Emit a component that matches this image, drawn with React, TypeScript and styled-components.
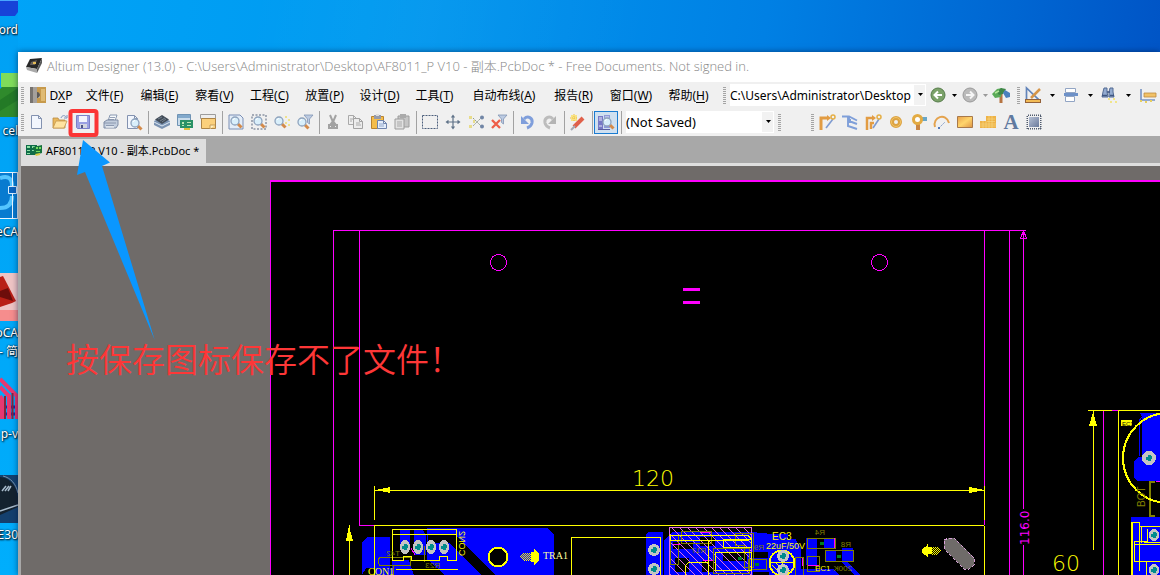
import React from "react";
import styled, { createGlobalStyle } from "styled-components";

const ui = `"Noto Sans", "Noto Sans CJK SC", sans-serif`;

const GlobalStyle = createGlobalStyle`
  * { box-sizing: border-box; }
  body { margin: 0; overflow: hidden; font-family: ${ui}; font-size: 12px; color: #000; }
  button, select { font: inherit; color: inherit; border: 0; background: none; padding: 0; margin: 0; border-radius: 0; }
  svg { display: block; }
`;

const Desktop = styled.div`
  position: relative;
  display: flex;
  height: 100vh;
  overflow: hidden;
  background:
    linear-gradient(100deg, rgba(255, 255, 255, 0) 20%, rgba(255, 255, 255, 0.03) 34%, rgba(255, 255, 255, 0) 52%),
    linear-gradient(98deg, #00a4f8 0%, #009af0 30%, #0080e4 62%, #0066d2 82%, #004cc0 100%);
`;

const Shortcuts = styled.nav`
  flex: 0 0 18px;
  overflow: hidden;
  display: flex;
  flex-direction: column;
  background: linear-gradient(#00a0f4, #00aefc);
`;

const Shortcut = styled.a`
  flex: 0 0 101px;
  color: #fff;
  text-decoration: none;
  text-shadow: 1px 1px 2px #000, 0 0 2px #013;
  line-height: 19px;
  white-space: pre;
  &:first-child { flex-basis: 71px; }
  svg { margin-bottom: 2px; }
`;

const ShortcutLabel = styled.span`
  display: flex;
  justify-content: flex-end;
  font-size: 12px;
`;

const Window = styled.main`
  flex: 1;
  min-width: 0;
  margin-top: 52px;
  display: flex;
  flex-direction: column;
  background: #a8a8a8;
  box-shadow: 0 0 6px rgba(0, 20, 60, 0.6);
`;

const TitleBar = styled.header`
  flex: 0 0 30px;
  display: flex;
  align-items: center;
  gap: 5px;
  padding: 0 0 3px 8px;
  background: #fff;
  color: #868686;
  white-space: pre;
`;

const Title = styled.h1`
  margin: 0;
  font: 300 13px/20px "Open Sans", "Noto Sans CJK SC", sans-serif;
`;

const Bar = styled.div<{ $height: number }>`
  flex: 0 0 ${(p) => p.$height}px;
  display: flex;
  align-items: center;
  padding: 0 0 2px 3px;
  overflow: hidden;
  background: #f0f0f0;
`;

const Grip = styled.span<{ $before?: number }>`
  flex: 0 0 3px;
  height: 17px;
  margin-left: ${(p) => p.$before ?? 0}px;
  margin-right: 1px;
  background: repeating-linear-gradient(#a4a4a4 0 1px, #f0f0f0 1px 2px);
`;

const MenuButton = styled.button<{ $width: number }>`
  flex: 0 0 ${(p) => p.$width}px;
  height: 22px;
  display: flex;
  align-items: center;
  justify-content: center;
  gap: 4px;
  white-space: pre;
  u { text-underline-offset: 2px; }
`;

const ToolButton = styled.button<{ $active?: boolean; $width?: number }>`
  flex: 0 0 ${(p) => p.$width ?? 23}px;
  height: 23px;
  display: flex;
  align-items: center;
  justify-content: center;
  ${(p) => p.$active && "background: #cfe0f0; border: 1px solid #1a7bd0;"}
`;

const Separator = styled.span`
  flex: 0 0 1px;
  height: 23px;
  margin: 0 1px 0 3px;
  background: #a2a2a2;
`;

const Combo = styled.label<{ $width: number }>`
  position: relative;
  flex: 0 0 ${(p) => p.$width}px;
  height: 22px;
  margin-left: 3px;
  background: linear-gradient(to left, #fff 1px, #f2f2f2 1px 12px, #fff 12px);
  border-top: 1px solid #fff;
  border-bottom: 1px solid #fff;
  svg { position: absolute; right: 3px; top: 8px; pointer-events: none; }
`;

const ComboSelect = styled.select<{ $size: number }>`
  appearance: none;
  width: 100%;
  height: 20px;
  padding: 0 14px 0 0;
  font-size: ${(p) => p.$size}px;
  outline: 0;
`;

const Tabs = styled.div`
  flex: 0 0 30px;
  margin: 0 0 0 3px;
  padding-top: 3px;
  border-bottom: 3px solid #dedede;
  display: flex;
`;

const Tab = styled.button`
  display: flex;
  align-items: center;
  gap: 4px;
  width: 185px;
  padding: 0 0 2px 5px;
  background: #dedede;
  font-size: 11px;
  white-space: pre;
`;

const Workspace = styled.section`
  flex: 1;
  min-height: 0;
  margin-left: 3px;
  overflow: hidden;
  background: #6f6b69;
`;

const Canvas = styled.svg`
  width: 100%;
  height: 100%;
`;

const Markup = styled.svg`
  position: absolute;
  left: 60px;
  top: 100px;
  pointer-events: none;
`;

const Remark = styled.p`
  position: absolute;
  left: 66px;
  top: 334px;
  margin: 0;
  font: 350 33px/48px "Noto Sans CJK SC", sans-serif;
  color: #fd3737;
  white-space: nowrap;
`;

const Lens = ({ x = 0, y = 0 }: { x?: number; y?: number }) => (
  <g transform={`translate(${x} ${y})`}>
    <path d="M8.500 8.500l4 4" stroke="#d38a4a" strokeWidth="3" />
    <circle cx="6" cy="6" r="4" fill="#d9effb" stroke="#8ea3bd" strokeWidth="1.300" />
    <path d="M4 5a2.500 2.500 0 0 1 2-1.500" stroke="#fff" fill="none" />
  </g>
);

const Page = ({ x = 2, y = 1, w = 11, h = 14, c = "#8392b0", f = "#f2f6fd" }) => (
  <path d={`M${x + 0.5} ${y + 0.5}h${w - 4}l3 3v${h - 4}h-${w - 1}z M${x + w - 3.5} ${y + 0.5}v3h3`} fill={f} stroke={c} />
);

const Funnel = () => <path d="M7 1h9l-3.500 4v5l-2-1.500V5z" fill="#bccbe2" stroke="#8194b4" strokeWidth=".8" />;

const glyphs: Record<string, React.ReactNode> = {
  new: <Page />,
  open: (
    <>
      <path d="M1 14V4h5l1 2h6v8z" fill="#e9b85c" stroke="#b98b42" strokeWidth=".8" />
      <path d="M1 14l3-7h11l-3 7z" fill="#ffe3a0" stroke="#c5984e" strokeWidth=".8" />
      <path d="M9 4c1-3 4-3 5-1m1-2v3h-3" stroke="#7d95bd" fill="none" />
    </>
  ),
  save: (
    <>
      <path d="M1.500 1.500h13v13h-12l-1-1z" fill="#9ba0e2" stroke="#7a7fc8" />
      <path d="M4 2h8v6H4z" fill="#f3f5fd" />
      <path d="M5 10h7v4H5z" fill="#d3d6e0" />
      <path d="M6 11h2v3H6z" fill="#4c5384" />
    </>
  ),
  print: (
    <>
      <path d="M5 7l2-6h7l-2 6z" fill="#f7fafd" stroke="#8897b0" />
      <path d="M1 8l3-2h11v5l-2 3H1z" fill="#c2cddd" stroke="#7e8ca5" />
      <path d="M1 9h12M3 11.500h8M7 3.500h5M6 5.500h5" stroke="#7e8ca5" strokeWidth=".8" />
      <path d="M3 13h8" stroke="#fff" />
    </>
  ),
  preview: (<><Page x={1} /><Lens x={3} y={3} /></>),
  layers: (
    <>
      <path d="M0 7l8-4 8 4v4l-8 4-8-4z" fill="#7b93b2" />
      <path d="M0 8l8 4 8-4" stroke="#dce7f2" fill="none" />
      <path d="M1 5.500L8 1l7 4.500L8 10z" fill="#424c58" />
      <path d="M4 5l4-2m-2 4l5-3M8 8l4-3" stroke="#8897a5" strokeWidth=".7" />
    </>
  ),
  board: (
    <>
      <path d="M.5.500h13v11H.5z" fill="#c9dceb" stroke="#6f93b4" />
      <path d="M1 1h12v3H1z" fill="#82a9cc" />
      <path d="M3 6h13v8H3z" fill="#2a9267" />
      <path d="M5 8h2v2H5zm5 0h4v1h-4zm0 3h4v1h-4zM5 11h2v1H5z" fill="#b9e7b4" />
      <path d="M7 14h6v2H7z" fill="#dec13b" />
    </>
  ),
  panel: (
    <>
      <path d="M.5.500h15v4H.5z" fill="#eee" stroke="#9c9c9c" />
      <path d="M1.500 4.500h14v10h-14z" fill="#fbd07c" stroke="#ae8547" />
      <path d="M10 15v-4h5" fill="#fff0c4" stroke="#c59b57" />
    </>
  ),
  zoomDoc: (<><path d="M1 1h11l3 3v11H1z" fill="#e4edf8" stroke="#7b8fb5" /><Lens x={1} y={1} /></>),
  zoomArea: (<><path d="M1 1h14v14H1z" fill="none" stroke="#59677e" strokeDasharray="2 1.500" /><Lens x={1} y={1} /></>),
  zoomSel: (<><Lens x={-1} y={1} /><path d="M11 2h2v2h-2zm3 3h2v2h-2zm-3 3h2v2h-2zm3 2h2v2h-2z" fill="#efe28d" /></>),
  zoomFilter: (<><Funnel /><Lens x={-1} y={2} /></>),
  cut: <path d="M5 1l3 7 3-7M8 7l-3 4m3-4l3 4M4 11h3v3H4zm5 0h3v3H9z" stroke="#a2a2a2" strokeWidth="2" fill="none" />,
  copy: (<><Page x={0} y={1} w={9} h={10} c="#a9a9a9" f="#efefef" /><Page x={5} y={4} w={10} h={11} c="#a2a2a2" f="#ececec" /><path d="M8 9h4m-4 2h5M2 5h3M2 7h2" stroke="#aaa" /></>),
  paste: (
    <>
      <path d="M.5 2.500h12v12H.5z" fill="#f4bd4b" stroke="#b9832e" />
      <path d="M3 1h7v4H3z" fill="#969bab" /><path d="M5 0h3v2H5z" fill="#ddd" />
      <Page x={6} y={6} w={10} h={9} c="#6f84ad" f="#e5eefb" /><path d="M8 10h5m-5 2h5" stroke="#93a8cc" />
    </>
  ),
  pasteMany: (
    <>
      <path d="M4 2h11v11H4z" fill="#c5c5c5" stroke="#9c9c9c" /><path d="M6 0h6v4H6z" fill="#aaa" />
      <path d="M1 5h9v10H1z" fill="#e2e2e2" stroke="#9c9c9c" /><path d="M3 8h5m-5 2h5m-5 2h5" stroke="#a9a9a9" />
    </>
  ),
  select: <path d="M.5 1.500h15v13H.5z" fill="none" stroke="#4c5f7c" strokeDasharray="2 1" />,
  move: <path d="M8 2v12M2 8h12M6.500 3.500L8 1.500l1.500 2m-3 9L8 14.500l1.500-2M3.500 6.500L1.500 8l2 1.500m9-3l2 1.500-2 1.500" fill="none" stroke="#5f7288" strokeWidth="1.200" />,
  deselect: (<><path d="M1 2h3v3H1zm0 9h3v3H1zm4-5h2v3H5z" fill="#e8dc8a" /><path d="M5 4l4 4-4 4M14 3l-5 5 5 5" stroke="#8f9a8a" fill="none" strokeDasharray="2 1" /><circle cx="14" cy="3.500" r="2" fill="#7186a6" /><circle cx="14" cy="12.500" r="2" fill="#7186a6" /></>),
  clear: (<><Funnel /><path d="M1 6l8 8m0-8l-8 8" stroke="#ee5d48" strokeWidth="2.300" /></>),
  undo: (<><path d="M5 5c4-4 9-1 8 4-.5 2-2 4-5 5" fill="none" stroke="#7f9edb" strokeWidth="3" /><path d="M2 2v8h8z" fill="#7f9edb" /></>),
  redo: (<><path d="M11 5C7 1 2 4 3 9c.5 2 2 4 5 5" fill="none" stroke="#bcbcbc" strokeWidth="3" /><path d="M14 2v8H6z" fill="#b4b4b4" /></>),
  wand: (<><path d="M1 1h6v6H1z" fill="#f8e484" /><path d="M4 0v8M0 4h8" stroke="#eebd47" strokeDasharray="1 1" /><path d="M4 13l9-9" stroke="#e0604a" strokeWidth="4" /><path d="M1 16l4-4" stroke="#a3a9b5" strokeWidth="2" /></>),
  browse: (
    <>
      <path d="M0 2h5v13H0z" fill="#7779c5" /><path d="M6 1h6v13H6z" fill="#8f9ad8" /><path d="M1 4h3m-3 2h3M7 3h4M1 12h3" stroke="#e7eafa" />
      <Lens x={3} y={2} /><path d="M0 15.500h12" stroke="#5b5fa3" />
    </>
  ),
  route: (<><path d="M2 16V4h7" fill="none" stroke="#e29c43" strokeWidth="3" /><path d="M8 1l4 3-4 3z" fill="#e29c43" /><path d="M7 14l7-9" stroke="#7f9bd0" strokeWidth="1.600" /><circle cx="14" cy="3" r="2" fill="none" stroke="#e5af45" strokeWidth="1.500" /></>),
  diff: <path d="M0 2.500h7l8 4M7 2v5l8 3M6 2v10l9 3M6 6h3" fill="none" stroke="#7f9fd9" strokeWidth="1.900" />,
  routes: (<><path d="M2 16V4h6M6 15V9h3" fill="none" stroke="#e29c43" strokeWidth="2.500" /><path d="M8 14l6-9" stroke="#7f9bd0" strokeWidth="1.600" /><path d="M7 1l4 3-4 3z" fill="#e29c43" /><circle cx="14" cy="3" r="2" fill="none" stroke="#e5af45" strokeWidth="1.500" /></>),
  pad: (<><circle cx="8" cy="8" r="4" fill="none" stroke="#dba243" strokeWidth="4" /><circle cx="8" cy="8" r="4.500" fill="none" stroke="#f4c461" /></>),
  via: (<><path d="M7 9v7" stroke="#ca8644" strokeWidth="4" /><path d="M9 3h7v4H9z" fill="#68a7c8" /><circle cx="6.500" cy="5.500" r="4" fill="#fff" stroke="#e3ab43" strokeWidth="3" /></>),
  arc: (<><path d="M1 13C-2 3 12-2 15 9" fill="none" stroke="#e4a34e" strokeWidth="2" /><path d="M5 14l6-6" stroke="#839cc7" strokeDasharray="2 1" /><path d="M4 13h2v2H4z" fill="#5379b9" /></>),
  fill: <path d="M.5 2.500h15v11H.5z" fill="url(#amber)" stroke="#a8794a" />,
  poly: (<><path d="M6 2h10v12H0V7h6z" fill="#eeb348" /><path d="M3 7v7m3-7v7m3-12v12m3-12v12M0 10h16M7 5h8M0 12h16M7 7.500h8" stroke="#f8dc88" strokeWidth=".6" /></>),
  text: <text x="8" y="15" textAnchor="middle" fontFamily="Liberation Serif" fontSize="21" fontWeight="700" fill="#60799f">A</text>,
  part: (<><path d="M2 1.500h13M2 14.500h13M1.500 2v13M14.500 2v13" stroke="#4f5a6d" strokeWidth="2" strokeDasharray="1 1" fill="none" /><path d="M2 2h12v12H2z" fill="#f0f0f0" /><path d="M3 3h10v10H3z" fill="url(#steel)" /></>),
  back: (<><circle cx="8" cy="8" r="7" fill="#7ba269" stroke="#567c4b" /><path d="M12 8H5m3-3.500L4.500 8 8 11.500" stroke="#fff" strokeWidth="2" fill="none" /></>),
  forward: (<><circle cx="8" cy="8" r="7" fill="#bababa" stroke="#999" /><path d="M4 8h7M8 4.500L11.500 8 8 11.500" stroke="#f5f5f5" strokeWidth="2" fill="none" /></>),
  tree: (<><path d="M8 6v10" stroke="#b67543" strokeWidth="3" /><path d="M4 2l5-1-1 9-6 1-3-4z" fill="#5aaa58" /><path d="M8 1l5 1-3 5-4 1-2-3z" fill="#3f8748" /><path d="M12 3l5 3v4l-4 1-3-5z" fill="#4b80bd" /><path d="M2 6l4-2" stroke="#b5e79a" strokeWidth="1.500" /></>),
  draft: (<><path d="M1.500 1v12H14z" fill="none" stroke="#6284ba" strokeWidth="1.700" /><path d="M6 11l9-9" stroke="#d59549" strokeWidth="2.500" /><path d="M0 14h16" stroke="#94623a" strokeWidth="4" /><path d="M1 14h14" stroke="#f2bb56" strokeWidth="2" /></>),
  align: (<><path d="M2.500 1.500h10v4h-10z" fill="#fff" stroke="#92a5c4" /><path d="M2.500 9.500h9v5h-9z" fill="#fff" stroke="#92a5c4" /><path d="M1 6h14v3H1z" fill="#6d91c8" /></>),
  find: (<><path d="M3 1h3v4l1 5H1l1-5zm6 0h3v4l1 5H8V5z" fill="#93abd0" stroke="#536b93" /><path d="M1 8.500h5m3 0h4M6 5h3" stroke="#3f5681" strokeWidth="1.600" /><path d="M7 11h2v2H7zm5 0h2v2h-2zm-3 3h2v2H9zm5 0h2v2h-2z" fill="#f1e58a" /></>),
  dims: (<><path d="M2 2v11h14" fill="none" stroke="#7592c3" strokeWidth="1.600" /><path d="M5 6h12v4H5z" fill="#f1c167" stroke="#bd8a41" strokeWidth=".8" /><path d="M1 14h2m3 1h2m3-1h2" stroke="#e8cf5e" strokeWidth="2" /></>),
  dxp: (<><path d="M0 0h8v16H0z" fill="#77736f" /><path d="M3 0h4v16H3z" fill="#a5a09b" /><path d="M7 0h9v16H7v-5c4 1 4-6 0-5z" fill="#c79a4c" /><path d="M11 2h4v12h-4" fill="#e0bb73" /><path d="M7 5c4 0 4 6 0 6z" fill="#5c5854" /></>),
  pcb: (<><path d="M0 3h11v10H0z" fill="#0f6c48" /><path d="M1 4h3v2H1zm5 0h3v2H6zM1 8h3v1H1zm5 0h3v1H6zM1 11h3v1H1z" fill="#8fe1a5" /><path d="M7 5l9-2v8l-7 2z" fill="#16713c" /><path d="M10 5h2v2h-2zm3 0h2v2h-2zm-3 4h4v1h-4z" fill="#74dc61" /><path d="M9 12l5-1v2l-4 1z" fill="#d9cc45" /></>),
  app: (<><path d="M4 1l12-1-5 11L0 9z" fill="#272727" /><path d="M0 9l11 2v4L1 12z" fill="#a9a9a9" /><path d="M11 11l5-11v5l-5 10z" fill="#595959" /><path d="M5 4l6-2-2 5H4z" fill="#68605a" /><path d="M7 4h3v2H7z" fill="#e4bd56" /></>),
};

const Glyph = ({ name }: { name: string }) => (
  <svg width="16" height="16" viewBox="0 0 16 16" fill="none" aria-hidden="true" overflow="visible">{glyphs[name]}</svg>
);

const Caret = ({ color = "#000" }: { color?: string }) => (
  <svg width="5" height="3" viewBox="0 0 5 3" aria-hidden="true"><path d="M0 0h5L2.500 3z" fill={color} /></svg>
);

const menus: [string, string, number][] = [
  ["文件", "F", 55], ["编辑", "E", 55], ["察看", "V", 55], ["工程", "C", 55], ["放置", "P", 55], ["设计", "D", 55],
  ["工具", "T", 55], ["自动布线", "A", 84], ["报告", "R", 55], ["窗口", "W", 60], ["帮助", "H", 55],
];

const toolGroups = [
  ["new", "open", "save"],
  ["print", "preview"],
  ["layers", "board", "panel"],
  ["zoomDoc", "zoomArea", "zoomSel", "zoomFilter"],
  ["cut", "copy", "paste", "pasteMany"],
  ["select", "move", "deselect", "clear"],
  ["undo", "redo"],
  ["wand"],
];

const placeTools = ["route", "diff", "routes", "pad", "via", "arc", "fill", "poly", "text", "part"];

const Pad = ({ x, y, rx = 5, ry = 6 }: { x: number; y: number; rx?: number; ry?: number }) => (
  <g>
    <ellipse cx={x} cy={y} rx={rx} ry={ry} fill="#c4c4c4" />
    <path d={`M${x - 3} ${y - 1}h2v-2h3v1h1v3h-1v2h-3v-1h-2z`} fill="#008c8c" />
  </g>
);

const Board = () => (
  <Canvas role="img" aria-label="PCB layout" shapeRendering="crispEdges">
    <defs>
      <pattern id="hatch" width="8" height="8" patternUnits="userSpaceOnUse">
        <path d="M0 0l8 8" stroke="#e070e0" />
      </pattern>
      <pattern id="mesh" width="2" height="2" patternUnits="userSpaceOnUse">
        <path d="M0 0h1v1H0zM1 1h1v1H1z" fill="#ff0" />
      </pattern>
    </defs>
    <g transform="translate(-21 -166)" fill="none">
      <rect x="270" y="180" width="4000" height="4000" fill="#000" />
      <path d="M270.500 4000V181H4000" stroke="#f0f" strokeWidth="1.500" />
      <g stroke="#f0f">
        <path d="M333.500 4000V230.500H1026M359.500 230V525.500H375M984.500 230V525M1009.500 230V4000M1023.500 231V509M1023.500 545V4000M1020 239l3.500-8 3.500 8M1020 238.500h7M1103.500 411V4000" />
        <circle cx="498.500" cy="262.500" r="8" />
        <circle cx="879.500" cy="262.500" r="8" />
        <path d="M683 289.500h17M683 302h17" strokeWidth="3" />
      </g>

      {/* copper */}
      <g fill="#00f">
        <path d="M362 542l5-5h23v31h-24l-4 7zM400 530h10v20h-10zM414 530h9l3 5v20h-12zM427 528h120l7 6v41H374v-7h18v-8h35z" />
        <path d="M646 534l2-2h15v43h-17zM664 541l8-9h80l20 2h20l9 14v27h-137z" />
        <path d="M806 538h11v27h-11zM824 538h11v11h-11zM826 551h10v11h-10zM842 548h11v14h-11zM795 569h38l7 6h-45zM842 562h6l12 13h-6z" />
        <path d="M1140 413h20v50h-18v-46zM1134 462l4-5h22v24h-23l-3-3zM1131 517h29v58h-29z" />
      </g>
      <path d="M428 535h27l40 40h-13l-33-32h-21zM409 560h19l17 15h-31z" fill="#000" />
      <path d="M1139 456v-35l5-7h16" stroke="#00f" />
      <g fill="#000">
        <path d="M673 542h20v7h-20zM700 537h15v9h-15zM723 552h24v9h-24zM675 558h14v14h-14zM702 561h14v11h-14zM752 552h16v6h-16zM788 534h12v5h-12zM753 572h16v3h-16z" />
      </g>
      <path d="M669.500 527.500h82v60h-82z" fill="url(#hatch)" stroke="#e070e0" />
      <g stroke="#808000">
        <path d="M670 535.500h8v29h-8zM681 531.500h30v12h-30zM713 548.500h36v25h-36zM748 559.500h18v10h-18zM735 533.500h18v34h-9v-22h-9zM807 538.500h28v10h-28zM825 550.500h28v11h-28zM807 556.500h12v15h-12zM795 557.500h8v18h-8z" />
        <path d="M380 557.500h30v8h-30l-2-3v-3zM393 565v10M424.500 546v16" />
        <path d="M1155 482h-5v34h5" strokeWidth="1.500" />
      </g>
      <g stroke="#f0f">
        <path d="M701 532.500h10M673 544.500h8M703 560.500h10M834.500 538v10M808 565.500h11M802.500 558v8M411 548l4 7M1156 481.500h4M1112 410.500h6" />
      </g>

      {/* silkscreen */}
      <g stroke="#ff0">
        <path d="M375 490.500h609M374.500 486v34M984.500 486v34M374 525.500h610M374.500 525V4000M984.500 526V4000M349.500 525V4000M1088 410.500h24M1118 410.500H4000M1093.500 411v139M1118.500 410V4000" />
        <path d="M392.500 560.500v-31h64v31h-9v-4h-8v4h-28v-4h-8v4zM392 534.500h64M396 569.500h62M571.500 575v-37.500h89V575" />
        <path d="M670 535.500h78l3 3-3 2h-77zM708.500 541v34M685 575v-9l4-4h19M723.500 539.500h28v8h-28zM715.500 552.500h36v18h-36z" />
        <circle cx="498" cy="557" r="9.500" fill="#000" strokeWidth="2" />
        <circle cx="782" cy="563" r="12.500" strokeWidth="2" />
        <path d="M770 562.500h25M772 565l10 10m-6-12l12 12m-6-12l9 9" />
        <circle cx="1168" cy="458" r="45" strokeWidth="2" />
        <path d="M1131.500 575v-52.500h8v48M1139 526.500h21M1141.500 527v16M1147 529v12h-13v20h12v14M1134 544.500h26v17h-26M1144 542h16" />
        <path d="M1131.500 523v52" strokeWidth="2" />
      </g>
      <g fill="#ff0">
        <path d="M375 490l15-3v6zM984 490l-15-3v6zM349 526l4 15h-7zM1093 412l4 14h-8z" />
        <path d="M534 549l5 5v7l-5 4v-3h-3v-10h3zM928 543l-1 3-5 3v4l5 3 1 2v-4h4v-7h-4z" />
        <path d="M520 556l4-3h8v8h-8zM931 547h6l4 4-4 4h-6z" fill="url(#mesh)" />
        <path d="M1121 420h11v6h-11z" />
      </g>
      <Pad x={405} y={547} ry={7} /><Pad x={418} y={547} ry={7} /><Pad x={431} y={547} ry={7} /><Pad x={444} y={547} ry={7} />
      <Pad x={654} y={550} rx={6} /><Pad x={654} y={569} rx={6} />
      <Pad x={783} y={556} rx={6} /><Pad x={783} y={570} rx={6} />
      <Pad x={1149} y={458} rx={7} ry={7} /><Pad x={1154} y={535} /><Pad x={1154} y={570} />
      <path d="M820 542h4v3h-4zM837 555h4v3h-4zM755 563h4v3h-4zM738 557h4v3h-4z" fill="#008020" />
      <path d="M944 540l5-2h5l20 20v7l-5 4h-5l-20-20z" fill="#6f6b69" stroke="#d8a0d8" strokeDasharray="3 2" />

      <g fill="#ff0" fontFamily="Liberation Sans" fontSize="10">
        <text x="632" y="486" fontFamily="DejaVu Sans" fontWeight="200" fontSize="22">120</text>
        <text x="1052" y="571" fontFamily="DejaVu Sans" fontWeight="200" fontSize="22">60</text>
        <text x="543" y="559" fontFamily="Liberation Serif" fontSize="10" fill="#ffffa0">TRA1</text>
        <text x="368" y="575" fontFamily="Liberation Serif">CON1</text>
        <text transform="translate(459 556) scale(1 -1) rotate(90)" x="0" y="0" fontSize="9">CON2</text>
        <text x="772" y="540">EC3</text>
        <text x="766" y="549" fontSize="9">22uF/50V</text>
        <text x="815" y="571" fontSize="8">EC1</text>
        <text x="1122" y="426" fontSize="6" fill="#000">EC1</text>
        <g fill="#808000" fontSize="8">
          <text transform="translate(400 556) scale(-1 1)">T42</text>
          <text transform="translate(440 568) scale(-1 1)">R23</text>
          <text transform="translate(825 535) scale(-1 1)">R4</text>
          <text transform="translate(851 547) scale(-1 1)">R8</text>
          <text transform="translate(852 571) scale(-1 1)">200K</text>
          <text transform="translate(706 553) scale(-1 1)">R17</text>
          <text transform="translate(764 550) scale(-1 1)">R9</text>
          <text transform="translate(1145 507) rotate(-90)" fontSize="10">BOT</text>
        </g>
      </g>
      <text transform="translate(1029 545) rotate(-90)" fill="#f0f" fontFamily="DejaVu Sans" fontSize="12">116.0</text>
    </g>
  </Canvas>
);

const DesktopIcons = () => (
  <Shortcuts aria-label="Desktop">
    <Shortcut href="#word">
      <svg width="18" height="18"><path d="M0 0h18v12l-3 4H0z" fill="#1742d8" /><path d="M0 0h18v1H0z" fill="#48a6ff" /></svg>
      <ShortcutLabel>ord</ShortcutLabel>
    </Shortcut>
    <Shortcut href="#excel">
      <svg width="18" height="48"><path d="M1 2h17v14H1z" fill="#7fdc5a" /><path d="M0 29V18l2-2h16v30H0z" fill="#2f8a2c" /><path d="M0 29l18-12v12L0 40z" fill="#237a26" /></svg>
      <ShortcutLabel>cel</ShortcutLabel>
    </Shortcut>
    <Shortcut href="#cad">
      <svg width="18" height="48"><path d="M0 0h18v47H0z" fill="#087bd0" /><path d="M0 6c9-3 12 1 12 8M0 36c10 0 12-6 12-12" stroke="#54c5ff" strokeWidth="4" fill="none" /><path d="M0 .500h18M0 46.500h18M12.500 0v46M17.500 0v46" stroke="#e9f5ff" /><path d="M8.500 14.500h8v7h-8z" fill="#0b65c0" stroke="#d9efff" /></svg>
      <ShortcutLabel>eCA</ShortcutLabel>
    </Shortcut>
    <Shortcut href="#autocad">
      <svg width="18" height="48"><path d="M0 0h18v48H0z" fill="#eec4c4" /><path d="M0 37h18v11H0z" fill="#f68d8d" /><path d="M0 4l3-1 13 25-4 2-12 4z" fill="#b81f16" /><path d="M0 18l8-3 5 13-13-4z" fill="#6d0d0b" /></svg>
      <ShortcutLabel>oCA</ShortcutLabel>
      <ShortcutLabel>- 简</ShortcutLabel>
    </Shortcut>
    <Shortcut href="#pads">
      <svg width="18" height="48"><path d="M0 33h18M0 40h18" stroke="#112aa8" strokeWidth="3" /><path d="M0 5l17 17v23M0 13l9 9v23M0 22l2 3v20" stroke="#e73872" strokeWidth="4" fill="none" /><path d="M12.500 19v26M5 22v23" stroke="#83253c" strokeWidth="2" /></svg>
      <ShortcutLabel>p-v</ShortcutLabel>
    </Shortcut>
    <Shortcut href="#e30">
      <svg width="18" height="48"><path d="M0 0h18v48H0z" fill="#14406e" /><path d="M0 2c10 0 17 10 18 20v10L0 40z" fill="#14222f" /><path d="M2 16l4-5m-1 5l4-5m-1 5l3-5M0 36l18-6" stroke="#a9bccd" strokeWidth="1.500" /><path d="M3 1c8 2 13 8 15 17" stroke="#7c92a8" fill="none" /></svg>
      <ShortcutLabel>E30</ShortcutLabel>
    </Shortcut>
  </Shortcuts>
);

const Gradients = styled.svg`
  position: absolute;
`;

export default function App() {
  return (
    <>
      <GlobalStyle />
      <Desktop>
        <Gradients width="0" height="0" aria-hidden="true">
          <defs>
            <linearGradient id="amber" x2="1" y2="1"><stop stopColor="#e9a04a" /><stop offset=".5" stopColor="#ffd56c" /><stop offset="1" stopColor="#dd9344" /></linearGradient>
            <linearGradient id="steel" x2="1" y2="1"><stop stopColor="#b6c1d5" /><stop offset="1" stopColor="#69799b" /></linearGradient>
          </defs>
        </Gradients>
        <DesktopIcons />
        <Window>
          <TitleBar>
            <Glyph name="app" />
            <Title>Altium Designer (13.0) - C:\Users\Administrator\Desktop\AF8011_P V10 - 副本.PcbDoc * - Free Documents. Not signed in.</Title>
          </TitleBar>
          <Bar $height={28}>
            <Grip />
            <MenuButton $width={52}><Glyph name="dxp" /><span>D<u>X</u>P</span></MenuButton>
            {menus.map(([label, key, width]) => (
              <MenuButton key={key} $width={width}><span>{label}(<u>{key}</u>)</span></MenuButton>
            ))}
            <Grip $before={7} />
            <Combo $width={196}>
              <ComboSelect $size={12} aria-label="Address"><option>C:\Users\Administrator\Desktop</option></ComboSelect>
              <Caret />
            </Combo>
            <ToolButton aria-label="back" $width={24}><Glyph name="back" /></ToolButton>
            <ToolButton aria-label="back list" $width={8}><Caret /></ToolButton>
            <ToolButton aria-label="forward"><Glyph name="forward" /></ToolButton>
            <ToolButton aria-label="forward list" $width={8}><Caret color="#999" /></ToolButton>
            <ToolButton aria-label="tree"><Glyph name="tree" /></ToolButton>
            <Grip $before={5} />
            {["draft", "align", "find", "dims"].map((name) => (
              <React.Fragment key={name}>
                <ToolButton aria-label={name} $width={24}><Glyph name={name} /></ToolButton>
                <ToolButton aria-label={name + " list"} $width={14}><Caret /></ToolButton>
              </React.Fragment>
            ))}
          </Bar>
          <Bar $height={26}>
            <Grip />
            {toolGroups.map((group, i) => (
              <React.Fragment key={i}>
                {group.map((name) => <ToolButton key={name} aria-label={name}><Glyph name={name} /></ToolButton>)}
                <Separator />
              </React.Fragment>
            ))}
            <ToolButton aria-label="browse" $active $width={24}><Glyph name="browse" /></ToolButton>
            <Separator />
            <Combo $width={148}>
              <ComboSelect $size={13} aria-label="Filter"><option>(Not Saved)</option></ComboSelect>
              <Caret />
            </Combo>
            <Grip $before={4} />
            <Grip $before={29} />
            {placeTools.map((name) => <ToolButton key={name} aria-label={name}><Glyph name={name} /></ToolButton>)}
          </Bar>
          <Tabs>
            <Tab><Glyph name="pcb" />AF8011_P V10 - 副本.PcbDoc *</Tab>
          </Tabs>
          <Workspace><Board /></Workspace>
        </Window>
        <Markup width="110" height="250" aria-hidden="true">
          <rect x="10.500" y="11" width="26" height="24" rx="2" fill="none" stroke="#fb3535" strokeWidth="4" />
          <path d="M23 40L50 62.500 42 66 94.700 240 25 72 17 75z" fill="#0a97ff" />
        </Markup>
        <Remark>按保存图标保存不了文件！</Remark>
      </Desktop>
    </>
  );
}
